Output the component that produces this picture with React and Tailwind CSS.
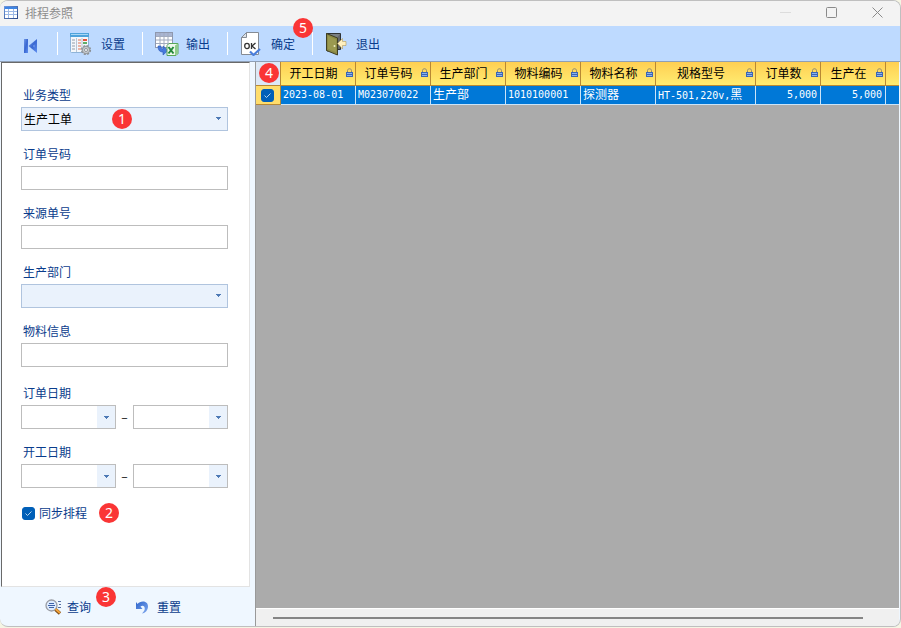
import { useState } from 'react';

const columns = [
  { key: 'startDate', title: '开工日期', width: 'w-[75px]' },
  { key: 'orderNo', title: '订单号码', width: 'w-[75px]' },
  { key: 'dept', title: '生产部门', width: 'w-[75px]' },
  { key: 'materialNo', title: '物料编码', width: 'w-[75px]' },
  { key: 'materialName', title: '物料名称', width: 'w-[75px]' },
  { key: 'spec', title: '规格型号', width: 'w-[100px]' },
  { key: 'orderQty', title: '订单数', width: 'w-[65px]', numeric: true },
  { key: 'producingQty', title: '生产在', width: 'w-[65px]', numeric: true },
];

const rows = [
  {
    startDate: '2023-08-01',
    orderNo: 'M023070022',
    dept: <span className="text-xs">生产部</span>,
    materialNo: '1010100001',
    materialName: <span className="text-xs">探测器</span>,
    spec: <>HT-501,220v,<span className="text-xs">黑</span></>,
    orderQty: '5,000',
    producingQty: '5,000',
  },
];

const GridIcon = () => (
  <svg width="14" height="13" viewBox="0 0 14 13" aria-hidden="true">
    <defs>
      <linearGradient id="grid" x1="0" y1="0" x2="1" y2="1">
        <stop offset="0" stopColor="#6f9be0" />
        <stop offset="1" stopColor="#2c4684" />
      </linearGradient>
    </defs>
    <rect width="14" height="13" fill="url(#grid)" />
    <rect x="1" y="1" width="12" height="2" fill="#3f86e4" />
    <rect x="1" y="3" width="12" height="9" fill="#fff" />
    <path d="M1 5.500h12M1 8.500h12M4.500 3v9M9.500 3v9" stroke="#9db9e6" />
  </svg>
);

const FirstIcon = () => (
  <svg width="14" height="16" viewBox="0 0 14 16" aria-hidden="true">
    <defs>
      <linearGradient id="first" x1="0" y1="0" x2="1" y2="1">
        <stop offset="0" stopColor="#6f97e6" />
        <stop offset="0.5" stopColor="#3a68d2" />
        <stop offset="1" stopColor="#5f8ff0" />
      </linearGradient>
    </defs>
    <path d="M0 1h4v14H0z" fill="url(#first)" />
    <path d="M13 1v14L4.500 8z" fill="url(#first)" />
    <path d="M10.500 6.500v3L9 8z" fill="#7fa6f2" />
  </svg>
);

const SettingsIcon = () => (
  <svg width="24" height="24" viewBox="0 0 24 24" aria-hidden="true">
    <rect x="0.500" y="1.500" width="18" height="19" rx="1" fill="#f4f7fb" stroke="#8fb4d8" />
    <path d="M0 1h19v4H0z" fill="#4fa3dc" />
    <path d="M1 2h17v1H1z" fill="#a9d7f4" />
    <path d="M6.500 6v14M12 6v14" stroke="#b9c6d6" />
    <path d="M2 8h3M2 11h3M2 14h3M2 17h3" stroke="#b4bcc4" strokeWidth="1.500" />
    <path d="M8 8h3M8 11h3M8 14h3M8 17h3" stroke="#e8a08c" strokeWidth="1.500" />
    <path d="M13 8h4" stroke="#e4553c" strokeWidth="2" />
    <path d="M13 11h4" stroke="#5fae68" strokeWidth="2" />
    <circle cx="16" cy="18" r="4.200" fill="#c4c8cc" stroke="#8b9197" strokeWidth="1.800" strokeDasharray="2 1.300" />
    <circle cx="16" cy="18" r="3.600" fill="#c9cdd1" stroke="#8d9297" strokeWidth="0.800" />
    <circle cx="16" cy="18" r="1.500" fill="#fff" stroke="#7b8187" strokeWidth="0.800" />
  </svg>
);

const ExportIcon = () => (
  <svg width="24" height="24" viewBox="0 0 24 24" aria-hidden="true">
    <rect x="0.500" y="0.500" width="17" height="15" fill="#fff" stroke="#8f98ae" />
    <path d="M1 1h16v3H1z" fill="#a9b5d2" />
    <path d="M1 4.500h16M1 8h16M1 11.500h16M5 1v14M9 1v14M13 1v14" stroke="#a2abbe" />
    <path d="M3 14c0 5 2.500 6 5 6v3l5-4.500L8 14v3c-1 0-2-.5-2-3z" fill="#4779dc" stroke="#2a57b8" strokeWidth="0.600" />
    <path d="M12 13.500l2-2h9v10l-2 2h-9z" fill="#eef8ec" stroke="#58a65a" />
    <path d="M20 13.500l3-2v10l-3 2z" fill="#8fcb8b" />
    <path d="M13.500 15l5 6.500M18.500 15l-5 6.500" stroke="#24893a" strokeWidth="2" />
  </svg>
);

const OkIcon = () => (
  <svg width="24" height="24" viewBox="0 0 24 24" aria-hidden="true">
    <path d="M6.500.5h12v22h-17v-17z" fill="#fff" stroke="#858b94" />
    <path d="M6.500.5v5h-5z" fill="#dde2e8" stroke="#858b94" />
    <ellipse cx="7" cy="14" rx="2.300" ry="2.600" fill="none" stroke="#333" strokeWidth="1.300" />
    <path d="M11.500 11v6M15.500 11L12 14l3.500 3" fill="none" stroke="#333" strokeWidth="1.300" />
    <path d="M10 19.500l3.500 3.500L20 17" fill="none" stroke="#4b7edb" strokeWidth="2.200" />
  </svg>
);

const ExitIcon = () => (
  <svg width="24" height="24" viewBox="0 0 24 24" aria-hidden="true">
    <path d="M1.500 1.500h14v16h-4L2 19z" fill="#63676b" stroke="#2f3335" />
    <path d="M4 2h11l-3 4z" fill="#7b8184" />
    <path d="M1.500 1.500L12.500 6v17L1.500 18.500z" fill="#8c8b45" stroke="#3f3f24" />
    <path d="M3 4l8 3.500v12.500l-8-3z" fill="#9a9950" />
    <circle cx="9.500" cy="14" r="1" fill="#ececc0" />
    <path d="M12.500 11.500l5-5v3h3.500v4h-3.500v3.500z" fill="#fff0c0" stroke="#b59a55" strokeWidth="0.600" />
  </svg>
);

const SearchIcon = () => (
  <svg width="17" height="16" viewBox="0 0 17 16" aria-hidden="true">
    <path d="M13 2.500h3M14 5.500h2M13 8.500h3" stroke="#5872a5" />
    <circle cx="6.500" cy="6.500" r="5.500" fill="#dcebff" stroke="#9a9da4" strokeWidth="1.300" />
    <path d="M4 4.500h5M3 6.500h7M4 8.500h5" stroke="#3f63a8" />
    <path d="M10.500 10.500l4.500 4" stroke="#7a4a18" strokeWidth="3.500" />
    <path d="M10.500 10l4.500 4" stroke="#f5a53c" strokeWidth="2" />
  </svg>
);

const UndoIcon = () => (
  <svg width="14" height="14" viewBox="0 0 14 14" aria-hidden="true">
    <defs>
      <linearGradient id="undo" x1="0" y1="0" x2="1" y2="1">
        <stop offset="0" stopColor="#2f66cc" />
        <stop offset="1" stopColor="#7fa8ee" />
      </linearGradient>
    </defs>
    <path d="M1 2l1.500 2C5 .5 13 0 13 6.500c0 3.500-2.500 6.500-6 7 2-2 3-3.500 2.700-5.500C9.500 5.500 7 5 5.500 6.500L7.500 9H1z" fill="url(#undo)" />
  </svg>
);

const LockIcon = () => (
  <svg width="7" height="9" viewBox="0 0 7 9" className="shrink-0" aria-hidden="true">
    <path d="M1.500 5V2.500C1.500.2 5.500.2 5.500 2.500V5" fill="none" stroke="#8b8672" />
    <path d="M0 4h7v5H0z" fill="#3c66b4" />
    <path d="M1 5h5v1H1zM1 7h5v1H1z" fill="#8db2ec" />
  </svg>
);

const Arrow = ({ className = '' }) => (
  <svg width="5" height="3" viewBox="0 0 5 3" className={className} aria-hidden="true">
    <path d="M0 0h5v1H4v1H3v1H2V2H1V1H0z" fill="#4d79b5" />
  </svg>
);

const Badge = ({ className, children }) => (
  <span
    className={`absolute z-10 flex size-5 items-center justify-center rounded-full bg-[#fa3535] text-sm leading-5 font-normal text-white font-['Noto_Sans',sans-serif] ${className}`}
  >
    {children}
  </span>
);

const Check = ({ id, label, checked, onChange }) => (
  <span className="relative flex size-[13px] shrink-0">
    <input
      id={id}
      type="checkbox"
      aria-label={label}
      checked={checked}
      onChange={(e) => onChange(e.target.checked)}
      className="peer size-[13px] appearance-none rounded-[3px] border border-[#005fb8] bg-white checked:bg-[#005fb8]"
    />
    <svg viewBox="0 0 13 13" className="pointer-events-none absolute inset-0 hidden size-[13px] peer-checked:block" aria-hidden="true">
      <path d="M3.500 6.500l2 2 4-4" fill="none" stroke="#b5d4ee" />
    </svg>
  </span>
);

const ToolButton = ({ icon, children }) => (
  <button type="button" className="flex h-[23px] w-[85px] items-center gap-[7px] border-l border-white pl-3">
    {icon}
    {children}
  </button>
);

const Field = ({ id, label, children }) => (
  <div className="relative">
    <label htmlFor={id} className="mb-0.5 block pl-0.5 leading-5">{label}</label>
    {children}
  </div>
);

const TextField = ({ id, label }) => (
  <Field id={id} label={label}>
    <input id={id} type="text" className="block h-6 w-full border border-[#bdbdbd] bg-white px-1 text-black" />
  </Field>
);

const SelectField = ({ id, label, options, children }) => (
  <Field id={id} label={label}>
    <div className="relative">
      <select id={id} className="block h-6 w-full appearance-none border border-[#b0c4de] bg-[#eaf2fc] px-0.5 text-black">
        {options.map((option) => (
          <option key={option}>{option}</option>
        ))}
      </select>
      <Arrow className="pointer-events-none absolute top-2.5 right-[7px]" />
      {children}
    </div>
  </Field>
);

const DateBox = ({ id, label }) => (
  <div className="flex h-6 min-w-0 flex-1 border border-[#bdbdbd] bg-white">
    <input id={id} type="text" aria-label={label} className="min-w-0 flex-1 px-1 text-black" />
    <button type="button" aria-label={label} className="flex w-[18px] items-center justify-center bg-[#eaf2fc]">
      <Arrow />
    </button>
  </div>
);

const DateRange = ({ id, label }) => (
  <Field id={`${id}-from`} label={label}>
    <div className="flex items-center">
      <DateBox id={`${id}-from`} label={label} />
      <span className="w-[17px] text-center text-black">–</span>
      <DateBox id={`${id}-to`} label={label} />
    </div>
  </Field>
);

export default function App() {
  const [sync, setSync] = useState(true);
  const [selected, setSelected] = useState(true);

  return (
    <div className="h-screen bg-[#f5f5e4] pb-px text-xs text-[#0a3c8c] font-['Noto_Sans_CJK_SC',sans-serif]">
      <div className="flex h-full flex-col overflow-hidden rounded-lg border-t border-r border-b border-[#bfbfbf] bg-[#eff7ff]">
        {/* Title bar */}
        <header className="flex h-[25px] shrink-0 items-center bg-[#f3f3f3] pb-0.5 pl-1 text-[#8c8c8c]">
          <GridIcon />
          <h1 className="ml-[7px] flex-1">排程参照</h1>
          <div className="flex">
            <button type="button" aria-label="最小化" className="flex w-[46px] items-center justify-center">
              <svg width="11" height="11" viewBox="0 0 11 11"><path d="M0 5.500h11" stroke="#dcdcdc" /></svg>
            </button>
            <button type="button" aria-label="最大化" className="flex w-[46px] items-center justify-center">
              <svg width="11" height="11" viewBox="0 0 11 11"><rect x="0.500" y="0.500" width="10" height="10" rx="1" fill="none" stroke="#8a8a8a" /></svg>
            </button>
            <button type="button" aria-label="关闭" className="flex w-[46px] items-center justify-center">
              <svg width="11" height="11" viewBox="0 0 11 11"><path d="M.5.5l10 10M10.500.5l-10 10" stroke="#8a8a8a" /></svg>
            </button>
          </div>
        </header>

        {/* Toolbar */}
        <nav className="flex h-9 shrink-0 items-center border-b border-[#8f9fb5] bg-[#bedaff]">
          <button type="button" aria-label="首页" className="flex w-[57px] items-center pt-1 pl-6"><FirstIcon /></button>
          <ToolButton icon={<SettingsIcon />}>设置</ToolButton>
          <ToolButton icon={<ExportIcon />}>输出</ToolButton>
          <div className="relative">
            <ToolButton icon={<OkIcon />}>确定</ToolButton>
            <Badge className="-top-3.5 -right-px">5</Badge>
          </div>
          <ToolButton icon={<ExitIcon />}>退出</ToolButton>
        </nav>

        <main className="flex min-h-0 flex-1">
          {/* Filters */}
          <aside className="flex w-[255px] shrink-0 flex-col">
            <form className="mr-[5px] ml-px flex flex-1 flex-col gap-[13px] border border-t-[#696969] border-r-[#e3e3e3] border-b-[#e3e3e3] border-l-[#696969] bg-white pt-[22px] pr-[21px] pl-[19px]">
              <SelectField id="bizType" label="业务类型" options={['生产工单']}>
                <Badge className="top-0.5 left-[91px]">1</Badge>
              </SelectField>
              <TextField id="orderNo" label="订单号码" />
              <TextField id="sourceNo" label="来源单号" />
              <SelectField id="dept" label="生产部门" options={['']} />
              <TextField id="material" label="物料信息" />
              <div className="flex flex-col gap-[13px] pt-[3px]">
                <DateRange id="orderDate" label="订单日期" />
                <DateRange id="startDate" label="开工日期" />
              </div>
              <div className="relative flex items-center gap-1 pt-0.5 pl-px">
                <Check id="sync" checked={sync} onChange={setSync} />
                <label htmlFor="sync" className="leading-5">同步排程</label>
                <Badge className="left-[78px]">2</Badge>
              </div>
            </form>
            <div className="flex h-[39px] items-center pl-[45px]">
              <div className="relative">
                <button type="button" className="flex items-center gap-[5px]"><SearchIcon />查询</button>
                <Badge className="-top-3 -right-[25px]">3</Badge>
              </div>
              <button type="button" className="ml-11 flex items-center gap-2"><UndoIcon />重置</button>
            </div>
          </aside>

          {/* Result grid */}
          <section className="mr-px flex min-w-0 flex-1 flex-col border-l border-[#999]">
            <div className="min-h-0 flex-1 overflow-hidden bg-[#ababab]">
              <table className="w-full table-fixed border-separate border-spacing-0">
                <thead>
                  <tr className="h-6 bg-linear-to-b from-[#ffcf52] to-[#ffed72] text-black">
                    <th className="relative w-[25px] border-r border-b border-[#b88834] bg-[#dce8f6] p-0">
                      <Badge className="top-px left-[3px]">4</Badge>
                    </th>
                    {columns.map((col) => (
                      <th key={col.key} className={`${col.width} border-r border-b border-[#b88834] p-0 font-normal`}>
                        <div className="flex items-center pr-0.5 pb-0.5">
                          <span className="flex-1 text-center leading-5">{col.title}</span>
                          <LockIcon />
                        </div>
                      </th>
                    ))}
                    <th className="border-b border-[#b88834] p-0" />
                  </tr>
                </thead>
                <tbody>
                  {rows.map((row) => (
                    <tr key={row.orderNo} className="h-[19px] bg-[#0078d7] text-[10px] text-white font-['DejaVu_Sans_Mono','Noto_Sans_CJK_SC',monospace]">
                      <td className="border-r border-b border-[#b88834] bg-[#ffdd6b] p-0">
                        <div className="flex justify-center pr-px">
                          <Check id="row-check" label="选择" checked={selected} onChange={setSelected} />
                        </div>
                      </td>
                      {columns.map((col) => (
                        <td
                          key={col.key}
                          className={`overflow-hidden border-r border-b border-white/80 py-0 pr-[3px] pl-0.5 leading-4 whitespace-nowrap ${col.numeric ? 'text-right' : ''}`}
                        >
                          {row[col.key]}
                        </td>
                      ))}
                      <td className="border-b border-white/80 p-0" />
                    </tr>
                  ))}
                </tbody>
              </table>
            </div>
            <div className="flex h-[18px] shrink-0 items-center border-t border-white bg-[#f0f0f0] pr-9 pl-[17px]">
              <div className="h-0.5 w-full bg-[#858585]" />
            </div>
          </section>
        </main>
      </div>
    </div>
  );
}
